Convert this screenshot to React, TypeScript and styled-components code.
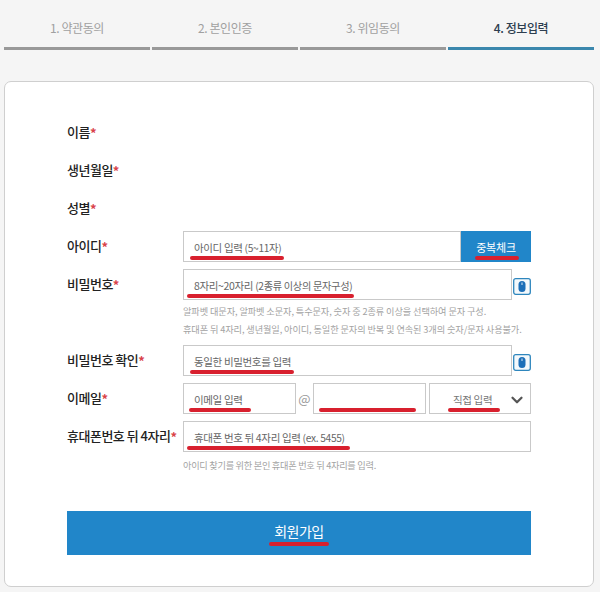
import styled, { createGlobalStyle } from "styled-components";
import { ChevronDown } from "lucide-react";

const GlobalStyle = createGlobalStyle`
  html, body {
    margin: 0;
    background-color: #f5f5f5;
  }
  * {
    box-sizing: border-box;
  }
`;

const Page = styled.div`
  width: 600px;
  height: 592px;
  overflow: hidden;
  padding: 0 6px 0 4px;
  font-family: "Noto Sans CJK KR", "Noto Sans", sans-serif;
`;

const Steps = styled.ul`
  display: grid;
  grid-template-columns: repeat(4, 1fr);
  gap: 2px;
  height: 50px;
  margin: 0 0 31px;
  padding: 0;
  list-style: none;
`;

const Step = styled.li<{ $active?: boolean }>`
  display: flex;
  align-items: center;
  justify-content: center;
  height: 50px;
  padding-top: 8px;
  border-bottom: 3px solid ${(p) => (p.$active ? "#3b87ad" : "#999999")};
  font-size: 12px;
  letter-spacing: -0.4px;
  font-weight: ${(p) => (p.$active ? 500 : 400)};
  color: ${(p) => (p.$active ? "#2d3e50" : "#a0a0a0")};
`;

const Card = styled.form`
  display: flex;
  flex-direction: column;
  height: 506px;
  padding: 35px 62px 0;
  background-color: #fff;
  border: 1px solid #cfcfcf;
  border-radius: 7px;
`;

const Rows = styled.div`
  display: flex;
  flex-direction: column;
  gap: 7px;
`;

const Row = styled.div`
  display: grid;
  grid-template-columns: 116px 1fr;
  min-height: 31px;
`;

const Label = styled.label`
  display: block;
  height: 31px;
  padding-top: 5px;
  font-size: 13px;
  line-height: 20px;
  letter-spacing: -0.5px;
  color: #222;
  font-weight: 500;
  white-space: nowrap;
`;

const Star = styled.span`
  color: #d9434a;
  font-weight: 700;
  vertical-align: -1px;
`;

const Fields = styled.div`
  display: flex;
  align-items: center;
  min-width: 0;
`;

const Box = styled.div<{ $width?: number }>`
  display: flex;
  align-items: center;
  flex: ${(p) => (p.$width ? `0 0 ${p.$width}px` : "1")};
  height: 31px;
  padding: 2px 0 0 10px;
  border: 1px solid #c9c9c9;
  font-size: 10.5px;
  letter-spacing: -0.35px;
  color: #666;
  white-space: nowrap;
`;

const Small = styled.span`
  font-size: 10.2px;
  letter-spacing: -0.3px;
`;

const Mark = styled.span<{ $left?: number; $right?: number; $width?: number }>`
  position: relative;
  display: inline-block;
  min-width: ${(p) => p.$width ?? 0}px;
  min-height: 15px;

  &::after {
    content: "";
    position: absolute;
    left: ${(p) => -(p.$left ?? 4)}px;
    right: ${(p) => -(p.$right ?? 3)}px;
    bottom: -5px;
    height: 4px;
    border-radius: 2px;
    background-color: #d8202e;
  }
`;

const CheckButton = styled.div`
  display: flex;
  align-items: center;
  justify-content: center;
  flex: 0 0 70px;
  height: 31px;
  background-color: #2186c9;
  color: #fff;
  font-size: 11px;
  letter-spacing: -0.2px;
`;

const EyeButton = styled.span`
  display: flex;
  flex: 0 0 18px;
  margin: 3px 0 0 1px;
`;

const At = styled.span`
  flex: 0 0 17px;
  text-align: center;
  font-size: 13px;
  color: #999;
`;

const SelectBox = styled(Box)`
  justify-content: space-between;
  margin-left: 3px;
  padding: 2px 4px 0 23px;
  color: #777;
  svg {
    color: #555;
  }
`;

const Hint = styled.p`
  margin: 0;
  padding-left: 116px;
  font-size: 9.2px;
  line-height: 18px;
  letter-spacing: -0.28px;
  color: #a3a3a3;
  white-space: nowrap;
`;

const PasswordHint = styled(Hint)`
  margin-top: 2px;
  letter-spacing: -0.11px;
`;

const PhoneHint = styled(Hint)`
  margin-top: 4px;
`;

const Submit = styled.div`
  display: flex;
  align-items: center;
  justify-content: center;
  height: 44px;
  margin-top: 37px;
  padding-bottom: 4px;
  background-color: #2186c9;
  color: #fff;
  font-size: 14px;
  letter-spacing: -0.5px;
`;

const SubmitMark = styled(Mark)`
  &::after {
    bottom: -5px;
  }
`;

function MouseIcon() {
  return (
    <svg width="18" height="17" viewBox="0 0 18 17" aria-hidden="true">
      <rect x="0.7" y="0.7" width="16.6" height="15.6" rx="2" fill="#f4f9fc" stroke="#2e86bd" strokeWidth="1.3" />
      <rect x="5.5" y="3" width="7" height="11" rx="3.5" fill="#1c6fb8" />
      <rect x="8.5" y="4.5" width="1" height="2.5" fill="#d8e8f4" />
    </svg>
  );
}

function Required({ children }: { children: string }) {
  return (
    <Label>
      {children}
      <Star>*</Star>
    </Label>
  );
}

export default function App() {
  return (
    <Page>
      <GlobalStyle />
      <Steps>
        <Step>1. 약관동의</Step>
        <Step>2. 본인인증</Step>
        <Step>3. 위임동의</Step>
        <Step $active>4. 정보입력</Step>
      </Steps>
      <Card>
        <Rows>
          <Row>
            <Required>이름</Required>
          </Row>
          <Row>
            <Required>생년월일</Required>
          </Row>
          <Row>
            <Required>성별</Required>
          </Row>
          <Row>
            <Required>아이디</Required>
            <Fields>
              <Box>
                <Mark>
                  아이디 입력 <Small>(5~11자)</Small>
                </Mark>
              </Box>
              <CheckButton>
                <Mark $left={1} $right={3}>중복체크</Mark>
              </CheckButton>
            </Fields>
          </Row>
          <div>
            <Row>
              <Required>비밀번호</Required>
              <Fields>
                <Box>
                  <Mark $left={7} $right={2}>
                    8자리~20자리 <Small>(2종류 이상의 문자구성)</Small>
                  </Mark>
                </Box>
                <EyeButton>
                  <MouseIcon />
                </EyeButton>
              </Fields>
            </Row>
            <PasswordHint>
              알파벳 대문자, 알파벳 소문자, 특수문자, 숫자 중 2종류 이상을 선택하여 문자 구성.
              <br />
              휴대폰 뒤 4자리, 생년월일, 아이디, 동일한 문자의 반복 및 연속된 3개의 숫자/문자 사용불가.
            </PasswordHint>
          </div>
          <Row>
            <Required>비밀번호 확인</Required>
            <Fields>
              <Box>
                <Mark>동일한 비밀번호를 입력</Mark>
              </Box>
              <EyeButton>
                <MouseIcon />
              </EyeButton>
            </Fields>
          </Row>
          <Row>
            <Required>이메일</Required>
            <Fields>
              <Box $width={113}>
                <Mark $left={5} $right={8}>이메일 입력</Mark>
              </Box>
              <At>@</At>
              <Box $width={113}>
                <Mark $left={5} $right={5} $width={87} />
              </Box>
              <SelectBox $width={102}>
                <Mark $left={5} $right={8}>직접 입력</Mark>
                <ChevronDown size={18} strokeWidth={3} />
              </SelectBox>
            </Fields>
          </Row>
          <div>
            <Row>
              <Required>휴대폰번호 뒤 4자리</Required>
              <Fields>
                <Box>
                  <Mark $left={7} $right={5}>
                    휴대폰 번호 뒤 4자리 입력 <Small>(ex. 5455)</Small>
                  </Mark>
                </Box>
              </Fields>
            </Row>
            <PhoneHint>아이디 찾기를 위한 본인 휴대폰 번호 뒤 4자리를 입력.</PhoneHint>
          </div>
        </Rows>
        <Submit>
          <SubmitMark $left={5} $right={5}>회원가입</SubmitMark>
        </Submit>
      </Card>
    </Page>
  );
}
